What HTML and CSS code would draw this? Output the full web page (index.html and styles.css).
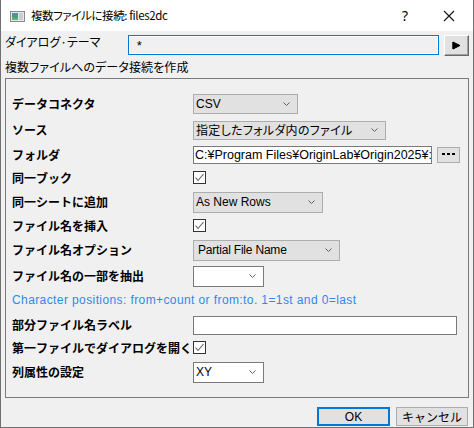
FILE: index.html
```html
<!DOCTYPE html>
<html lang="ja">
<head>
<meta charset="utf-8">
<title>複数ファイルに接続</title>
<link rel="stylesheet" href="styles.css">
</head>
<body>
<div class="window">
  <div class="titlebar">
    <svg class="app-icon" width="15" height="11" viewBox="0 0 15 11">
      <defs>
        <linearGradient id="g1" x1="0" y1="0" x2="0" y2="1">
          <stop offset="0" stop-color="#5a8fb8"/>
          <stop offset="0.5" stop-color="#3f9a86"/>
          <stop offset="1" stop-color="#7ab86a"/>
        </linearGradient>
      </defs>
      <rect x="0.5" y="0.5" width="14" height="10" fill="#e8e8e8" stroke="#8a8a8a"/>
      <rect x="2" y="2" width="6" height="7" fill="url(#g1)"/>
      <rect x="9" y="2" width="4" height="7" fill="#c9ccd0"/>
    </svg>
    <span class="title">複数ファイルに接続: files2dc</span>
    <span class="help">?</span>
    <svg class="close" width="12" height="12" viewBox="0 0 12 12">
      <path d="M1 1 L11 11 M11 1 L1 11" stroke="#111" stroke-width="1.1" fill="none"/>
    </svg>
  </div>
  <div class="body">
    <div class="theme-row">
      <span class="theme-label">ダイアログ·テーマ</span>
      <div class="theme-input">*</div>
      <div class="arrow-btn">
        <svg width="9" height="9" viewBox="0 0 9 9"><path d="M1 1 V8 M1 1 L8 4.5 L1 8 Z" fill="#000" stroke="#000" stroke-width="1"/></svg>
      </div>
    </div>
    <div class="subtitle">複数ファイルへのデータ接続を作成</div>
    <div class="group">
      <div class="row r1">
        <span class="label">データコネクタ</span>
        <div class="combo w-csv"><span class="latin">CSV</span><svg class="chev" width="7" height="4" viewBox="0 0 7 4"><path d="M0.5 0.5 L3.5 3.5 L6.5 0.5" stroke="#606060" fill="none"/></svg></div>
      </div>
      <div class="row r2">
        <span class="label">ソース</span>
        <div class="combo w-src"><span class="jp">指定したフォルダ内のファイル</span><svg class="chev" width="7" height="4" viewBox="0 0 7 4"><path d="M0.5 0.5 L3.5 3.5 L6.5 0.5" stroke="#606060" fill="none"/></svg></div>
      </div>
      <div class="row r3">
        <span class="label">フォルダ</span>
        <div class="textbox w-folder"><span class="path">C:¥Program Files¥OriginLab¥Origin2025¥:</span></div>
        <div class="dots-btn"><svg width="13" height="3" viewBox="0 0 13 3"><rect x="0" y="0" width="3" height="2" fill="#000"/><rect x="5" y="0" width="3" height="2" fill="#000"/><rect x="10" y="0" width="3" height="2" fill="#000"/></svg></div>
      </div>
      <div class="row r4">
        <span class="label">同一ブック</span>
        <div class="check"><svg width="11" height="11" viewBox="0 0 11 11"><path d="M1.5 5.5 L4 8.5 L9.5 2" stroke="#606060" stroke-width="1.1" fill="none"/></svg></div>
      </div>
      <div class="row r5">
        <span class="label">同一シートに追加</span>
        <div class="combo w-rows"><span class="latin">As New Rows</span><svg class="chev" width="7" height="4" viewBox="0 0 7 4"><path d="M0.5 0.5 L3.5 3.5 L6.5 0.5" stroke="#606060" fill="none"/></svg></div>
      </div>
      <div class="row r6">
        <span class="label">ファイル名を挿入</span>
        <div class="check"><svg width="11" height="11" viewBox="0 0 11 11"><path d="M1.5 5.5 L4 8.5 L9.5 2" stroke="#606060" stroke-width="1.1" fill="none"/></svg></div>
      </div>
      <div class="row r7">
        <span class="label">ファイル名オプション</span>
        <div class="combo w-partial"><span class="latin">Partial File Name</span><svg class="chev" width="7" height="4" viewBox="0 0 7 4"><path d="M0.5 0.5 L3.5 3.5 L6.5 0.5" stroke="#606060" fill="none"/></svg></div>
      </div>
      <div class="row r8">
        <span class="label">ファイル名の一部を抽出</span>
        <div class="combo white w-small"><span></span><svg class="chev" width="7" height="4" viewBox="0 0 7 4"><path d="M0.5 0.5 L3.5 3.5 L6.5 0.5" stroke="#606060" fill="none"/></svg></div>
      </div>
      <div class="row r9">
        <span class="hint">Character positions: from+count or from:to. 1=1st and 0=last</span>
      </div>
      <div class="row r10">
        <span class="label">部分ファイル名ラベル</span>
        <div class="textbox w-label"></div>
      </div>
      <div class="row r11">
        <span class="label">第一ファイルでダイアログを開く</span>
        <div class="check"><svg width="11" height="11" viewBox="0 0 11 11"><path d="M1.5 5.5 L4 8.5 L9.5 2" stroke="#606060" stroke-width="1.1" fill="none"/></svg></div>
      </div>
      <div class="row r12">
        <span class="label">列属性の設定</span>
        <div class="combo white w-small"><span class="latin">XY</span><svg class="chev" width="7" height="4" viewBox="0 0 7 4"><path d="M0.5 0.5 L3.5 3.5 L6.5 0.5" stroke="#606060" fill="none"/></svg></div>
      </div>
    </div>
    <div class="footer">
      <div class="btn ok">OK</div>
      <div class="btn cancel">キャンセル</div>
    </div>
  </div>
</div>
</body>
</html>
```

FILE: styles.css
```css
html, body {
  margin: 0;
  padding: 0;
  background: #f0f0f0;
}

.window {
  width: 474px;
  height: 428px;
  box-sizing: border-box;
  border-left: 1px solid #707070;
  border-right: 1px solid #707070;
  border-bottom: 1px solid #707070;
  background: #f0f0f0;
  font-family: "Noto Sans CJK JP", sans-serif;
  font-size: 12px;
  color: #000;
  overflow: hidden;
}

.titlebar {
  height: 31px;
  background: #fff;
  display: flex;
  align-items: center;
}

.app-icon {
  margin-left: 9px;
  margin-top: 1px;
}

.title {
  margin-left: 6px;
  font-size: 11.5px;
  font-feature-settings: "palt";
  letter-spacing: -0.4px;
  line-height: 16px;
  margin-top: -1px;
}

.help {
  margin-left: auto;
  font-family: "Noto Sans", sans-serif;
  font-size: 14px;
  margin-right: 35px;
}

.close {
  margin-right: 18px;
}

.body {
  padding: 4px 4px 0 4px;
}

.theme-row {
  display: flex;
  align-items: flex-start;
  height: 21px;
}

.theme-label {
  width: 123px;
  line-height: 14px;
  font-feature-settings: "palt";
}

.theme-input {
  width: 312px;
  height: 20px;
  box-sizing: border-box;
  border: 1px solid #0078d7;
  box-shadow: inset 0 0 0 1px #fff;
  background: #f0f0f0;
  padding-left: 8px;
  font-family: "Liberation Sans", sans-serif;
  font-size: 13px;
  line-height: 19px;
}

.arrow-btn {
  width: 25px;
  height: 21px;
  box-sizing: border-box;
  margin-left: 5px;
  background: #e1e1e1;
  border-top: 1px solid #fff;
  border-left: 1px solid #fff;
  border-right: 1px solid #696969;
  border-bottom: 1px solid #696969;
  box-shadow: inset -1px -1px 0 #a0a0a0;
  display: flex;
  align-items: center;
  justify-content: center;
}

.subtitle {
  margin-top: 3px;
  line-height: 16px;
  font-feature-settings: "palt";
  letter-spacing: 0.1px;
}

.group {
  margin-top: 3px;
  border: 1px solid #7a7a7a;
  padding: 12px 6px 9px 6px;
}

.row {
  display: flex;
  align-items: center;
}

.r1 { height: 25px; }
.r2 { height: 28px; }
.r3 { height: 21px; }
.r4 { height: 25px; }
.r5 { height: 24px; }
.r6 { height: 23px; }
.r7 { height: 26px; }
.r8 { height: 26px; }
.r9 { height: 22px; }
.r10 { height: 28px; }
.r11 { height: 17px; }
.r12 { height: 32px; }

.label {
  width: 181px;
  flex: none;
  font-weight: bold;
  line-height: 14px;
  white-space: nowrap;
}

.combo {
  height: 21px;
  box-sizing: border-box;
  border: 1px solid #adadad;
  background: #e1e1e1;
  padding-left: 2px;
  display: flex;
  align-items: center;
  white-space: nowrap;
  line-height: 14px;
}

.combo.white {
  background: #fff;
  border-color: #7a7a7a;
}

.chev {
  margin-left: auto;
  margin-right: 7px;
  flex: none;
}

.latin {
  font-family: "Liberation Sans", sans-serif;
  font-size: 12px;
}

.jp {
  font-feature-settings: "palt";
  letter-spacing: 0.3px;
}

.w-csv { width: 105px; height: 20px; }
.w-src { width: 193px; height: 19px; }
.w-rows { width: 130px; }
.w-partial { width: 147px; padding-left: 4px; }
.w-partial .latin { letter-spacing: -0.2px; }
.w-small { width: 71px; }

.textbox {
  height: 18px;
  box-sizing: border-box;
  border: 1px solid #7a7a7a;
  background: #fff;
  overflow: hidden;
  display: flex;
  align-items: center;
}

.w-folder { width: 239px; padding-left: 1px; }
.w-label { width: 264px; height: 19px; }

.path {
  white-space: nowrap;
  font-family: "Liberation Sans", "Noto Sans CJK JP", sans-serif;
  font-size: 12.5px;
  line-height: 14px;
}

.dots-btn {
  width: 23px;
  height: 16px;
  box-sizing: border-box;
  margin-left: 5px;
  border: 1px solid #adadad;
  background: #e1e1e1;
  display: flex;
  align-items: center;
  justify-content: center;
}

.check {
  width: 13px;
  height: 13px;
  box-sizing: border-box;
  border: 1px solid #333;
  background: #fff;
  display: flex;
  align-items: center;
  justify-content: center;
}

.hint {
  color: #3088ea;
  font-family: "Liberation Sans", sans-serif;
  font-size: 12px;
  letter-spacing: 0.4px;
  white-space: nowrap;
}

.footer {
  display: flex;
  justify-content: flex-end;
  margin-top: 9px;
  margin-right: 1px;
  gap: 6px;
}

.btn {
  width: 72px;
  height: 19px;
  box-sizing: border-box;
  border: 1px solid #adadad;
  background: #e1e1e1;
  display: flex;
  align-items: center;
  justify-content: center;
  line-height: 14px;
}

.btn.ok {
  width: 73px;
  border: 2px solid #0078d7;
  font-family: "Liberation Sans", sans-serif;
}
```
